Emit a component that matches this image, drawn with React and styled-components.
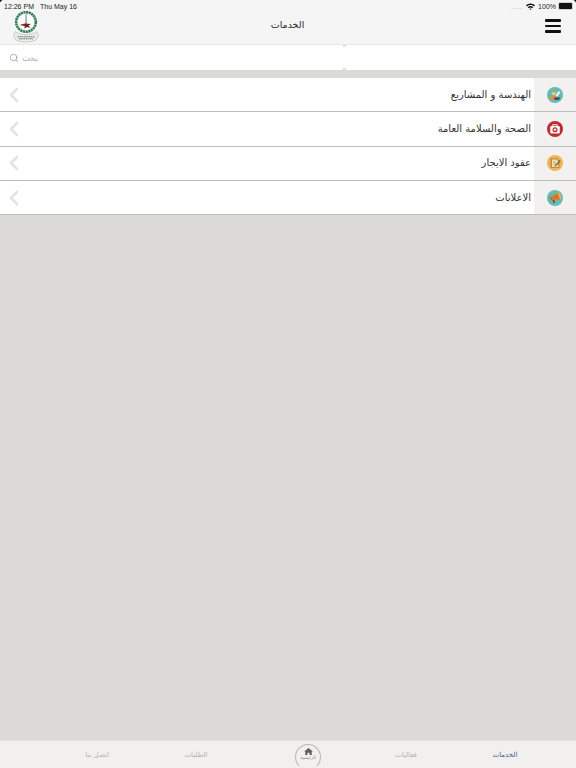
import React from 'react'
import styled, { createGlobalStyle } from 'styled-components'
import { Search, ChevronLeft } from 'lucide-react'

const arabicFont = '"DejaVu Sans", "Noto Sans", sans-serif'

const services = [
  { id: 1, title: 'الهندسة و المشاريع', icon: 'engineering' },
  { id: 2, title: 'الصحة والسلامة العامة', icon: 'health' },
  { id: 3, title: 'عقود الايجار', icon: 'lease' },
  { id: 4, title: 'الاعلانات', icon: 'ads' },
]

const tabs = [
  { id: 1, label: 'الخدمات', active: true },
  { id: 2, label: 'فعاليات' },
  { id: 3, label: 'الرئيسية', home: true },
  { id: 4, label: 'الطلبات' },
  { id: 5, label: 'اتصل بنا' },
]

const Logo = () => (
  <svg width="28" height="32" viewBox="0 0 28 32">
    <circle cx="14" cy="11" r="9.800" fill="#fbfbf9" stroke="#2f7d58" strokeWidth="2.600" strokeDasharray="2.200 .5" />
    <path d="M13.500 2.500l1 0 .5 11-1.700 0z" fill="#9a9888" />
    <path d="M7.500 14l5.500-1.500 6 .6-2.500 1.400 2 2.500-3.200-1-3 1.500.5-2.400z" fill="#74261c" />
    <path d="M3 20.500c3 2.200 6 3 11 3s8-.8 11-3l1.500 4.500-2 3.500c-3 1.800-6.500 2.500-10.500 2.500s-7.500-.7-10.500-2.500l-2-3.500z" fill="#ececE8" stroke="#b4b4ae" strokeWidth=".6" />
    <path d="M5.500 25.800h17M7 27.800h14" stroke="#6f6f6a" strokeWidth="1" strokeDasharray="1.600 .6" />
  </svg>
)

const ServiceIcon = ({ name }) => {
  if (name === 'engineering') {
    return (
      <svg width="16" height="16" viewBox="0 0 16 16">
        <circle cx="8" cy="8" r="8" fill="#62bcb5" />
        <path d="M2.800 12.500c.2-2.800 1.600-4.300 3.600-4.300l2.300 1.300-.6 3.500z" fill="#ee8a32" />
        <circle cx="6.700" cy="6.200" r="1.900" fill="#f4c79c" />
        <path d="M4.700 5.400c.4-1.700 3.300-1.900 4.100-.1z" fill="#f0902f" />
        <path d="M8.500 8.300l3.300-4.300 1.700 1.200-3.300 4.500z" fill="#f6f3e8" />
        <path d="M7.500 10.500h5.500l-.8 2.300H7z" fill="#3b4658" />
      </svg>
    )
  }
  if (name === 'health') {
    return (
      <svg width="16" height="16" viewBox="0 0 16 16">
        <circle cx="8" cy="8" r="8" fill="#bb2d33" />
        <rect x="3.200" y="5" width="9.600" height="7.500" rx="1.200" fill="#fbf3f0" />
        <path d="M5.800 5V3.700h4.400V5" fill="none" stroke="#fbf3f0" strokeWidth="1" />
        <circle cx="8" cy="8.700" r="2.500" fill="#bb2d33" />
        <path d="M8 7.300v2.800M6.600 8.700h2.800" stroke="#fff" strokeWidth="1" />
      </svg>
    )
  }
  if (name === 'lease') {
    return (
      <svg width="16" height="16" viewBox="0 0 16 16">
        <circle cx="8" cy="8" r="8" fill="#f2b552" />
        <path d="M3.500 3.300h6.500l2.500 2.500v7.200H3.500z" fill="#b88d52" />
        <path d="M5 4.500h4.500l1.700 1.700V12H5z" fill="#f4dfb0" />
        <path d="M6 7h3M6 9h2.500" stroke="#b88d52" strokeWidth=".7" />
        <path d="M8 10.300l4.700-5.300 1 .9-4.700 5.300-1.400.4z" fill="#7a6440" />
      </svg>
    )
  }
  return (
    <svg width="16" height="16" viewBox="0 0 16 16">
      <circle cx="8" cy="8" r="8" fill="#62bcb5" />
      <path d="M2.500 7l2-.6 1.200 3.300-1.800.7z" fill="#d8641c" />
      <path d="M4.500 6.400l6.500-3.200 2 6.300-7.300.2z" fill="#e8711e" />
      <path d="M11 3.200l1.700-.6 2 6.300-1.700.6z" fill="#f6b23f" />
      <path d="M5.300 10l1.700-.2 1.200 3-1.800.5z" fill="#8a4a20" />
    </svg>
  )
}

const HomeGlyph = () => (
  <svg width="9" height="7" viewBox="0 0 10 8">
    <path d="M5 0L0 4h1.300v4h2.500V5.400h2.400V8h2.500V4H10z" fill="#5f5f5c" />
  </svg>
)

const App = () => (
  <Page>
    <GlobalStyle />
    <Header>
      <StatusBar>
        <StatusGroup $gap={6}>
          <span>12:26 PM</span>
          <span>Thu May 16</span>
        </StatusGroup>
        <StatusGroup $gap={3}>
          <SignalDots>....</SignalDots>
          <svg width="9" height="7" viewBox="0 0 9 7">
            <path d="M0 2.300a6.400 6.400 0 0 1 9 0L8 3.400a5 5 0 0 0-7 0zM1.800 4.200a3.900 3.900 0 0 1 5.400 0L6.200 5.300a2.500 2.500 0 0 0-3.400 0zM3.500 6a1.500 1.500 0 0 1 2 0L4.500 7z" fill="#111" />
          </svg>
          <span>100%</span>
          <Battery />
        </StatusGroup>
      </StatusBar>
      <NavBar>
        <LogoSlot><Logo /></LogoSlot>
        <NavTitle>الخدمات</NavTitle>
        <MenuButton>
          <span /><span /><span />
        </MenuButton>
      </NavBar>
    </Header>
    <SearchBand>
      <Search size={10} color="#9a9a9a" strokeWidth={1.8} />
      <Placeholder>بحث</Placeholder>
    </SearchBand>
    <List>
      {services.map((item) => (
        <Row key={item.id}>
          <IconCell><ServiceIcon name={item.icon} /></IconCell>
          <RowTitle>{item.title}</RowTitle>
          <Arrow><ChevronLeft size={24} color="#e3e3e3" strokeWidth={2.6} /></Arrow>
        </Row>
      ))}
    </List>
    <TabBar>
      {tabs.map((tab) => (
        tab.home ? (
          <HomeTab key={tab.id}>
            <HomeBadge>
              <HomeGlyph />
              <small>{tab.label}</small>
            </HomeBadge>
          </HomeTab>
        ) : (
          <Tab key={tab.id} $active={tab.active}>{tab.label}</Tab>
        )
      ))}
    </TabBar>
  </Page>
)

const GlobalStyle = createGlobalStyle`
  html, body {
    margin: 0;
    padding: 0;
    background: #dbdad6;
  }
  * {
    box-sizing: border-box;
  }
`

const Page = styled.div`
  position: relative;
  width: 576px;
  height: 768px;
  display: flex;
  flex-direction: column;
  background: #dbdad6;
  font-family: ${arabicFont};
  overflow: hidden;
  &::before, &::after {
    content: '';
    position: absolute;
    top: 0;
    width: 3px;
    height: 3px;
  }
  &::before {
    left: 0;
    background: radial-gradient(circle at 100% 100%, transparent 2.500px, #222 3px);
  }
  &::after {
    right: 0;
    background: radial-gradient(circle at 0 100%, transparent 2.500px, #222 3px);
  }
`

const Header = styled.header`
  height: 45px;
  flex-shrink: 0;
  background: #f5f5f5;
  border-bottom: 1px solid #e6e6e4;
`

const StatusBar = styled.div`
  height: 11px;
  padding: 1px 4px 0 4px;
  display: flex;
  justify-content: space-between;
  align-items: center;
  font-family: "Liberation Sans", Arial, sans-serif;
  font-size: 7px;
  color: #222;
`

const StatusGroup = styled.div`
  display: flex;
  align-items: center;
  gap: ${(props) => props.$gap}px;
`

const SignalDots = styled.span`
  color: #999;
  letter-spacing: 1px;
`

const Battery = styled.span`
  width: 13px;
  height: 6px;
  background: #111;
  border-radius: 1px;
  box-shadow: 0 0 0 1px #cfcfcf;
`

const NavBar = styled.div`
  height: 33px;
  padding: 0 15px 0 12px;
  display: flex;
  align-items: flex-start;
  justify-content: space-between;
`

const LogoSlot = styled.div`
  width: 28px;
  height: 32px;
`

const NavTitle = styled.h1`
  margin: 6px 0 0 -10px;
  font-size: 9.500px;
  line-height: 16px;
  font-weight: 400;
  color: #2a2a2a;
`

const MenuButton = styled.div`
  width: 16px;
  margin-top: 8px;
  display: flex;
  flex-direction: column;
  gap: 3px;
  span {
    height: 2.500px;
    background: #111;
    border-radius: 1px;
  }
`

const SearchBand = styled.div`
  position: relative;
  height: 25px;
  flex-shrink: 0;
  padding-left: 9px;
  display: flex;
  align-items: center;
  gap: 3px;
  background: #fff;
  &::before, &::after {
    content: '';
    position: absolute;
    left: 343px;
    width: 3px;
    height: 2px;
    background: #dedede;
  }
  &::before {
    top: 0;
  }
  &::after {
    bottom: 0;
  }
`

const Placeholder = styled.span`
  font-size: 8.500px;
  color: #b0b0ae;
`

const List = styled.div`
  margin-top: 8px;
  flex: 1;
`

const Row = styled.div`
  height: 34.300px;
  display: flex;
  flex-direction: row-reverse;
  align-items: stretch;
  background: #fff;
  border-bottom: 1.300px solid #bdbdba;
`

const IconCell = styled.div`
  width: 42px;
  flex-shrink: 0;
  display: flex;
  align-items: center;
  justify-content: center;
  background: #f2f1ef;
`

const RowTitle = styled.div`
  flex: 1;
  padding: 0 3px 1px 0;
  display: flex;
  align-items: center;
  direction: rtl;
  font-size: 10px;
  color: #333;
`

const Arrow = styled.div`
  width: 28px;
  margin-left: 2px;
  display: flex;
  align-items: center;
`

const TabBar = styled.nav`
  height: 28px;
  flex-shrink: 0;
  padding-right: 21.500px;
  display: flex;
  flex-direction: row-reverse;
  align-items: center;
  background: #f1f0ee;
  border-top: 1px solid #e4e3e0;
`

const Tab = styled.div`
  width: 99px;
  text-align: center;
  font-size: 7px;
  color: ${(props) => (props.$active ? '#3d5f8f' : '#b2b2af')};
`

const HomeTab = styled.div`
  width: 99px;
  margin-left: 12px;
  align-self: flex-start;
  padding: 3px 0 0 2px;
  display: flex;
  justify-content: center;
`

const HomeBadge = styled.div`
  width: 26px;
  height: 26px;
  padding-top: 3px;
  display: flex;
  flex-direction: column;
  align-items: center;
  border: 1px solid #b5b5b2;
  border-bottom-color: transparent;
  border-radius: 50%;
  small {
    font-size: 4.500px;
    line-height: 6px;
    white-space: nowrap;
    color: #8a8a88;
  }
`

export default App
